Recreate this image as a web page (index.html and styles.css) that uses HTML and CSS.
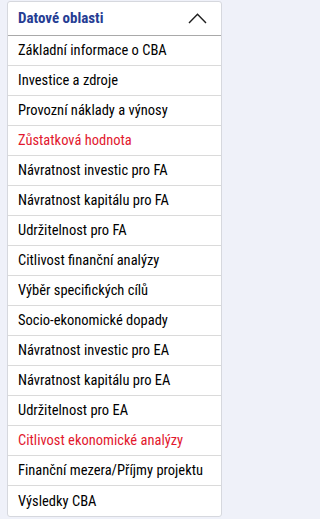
FILE: index.html
```html
<!DOCTYPE html>
<html lang="cs">
<head>
<meta charset="utf-8">
<link rel="stylesheet" href="styles.css">
</head>
<body>
<div class="panel">
  <div class="head">
    <span class="title">Datové oblasti</span>
    <svg class="chev" width="19" height="11" viewBox="0 0 19 11"><path d="M1 10 L9.5 1.2 L18 10" fill="none" stroke="#1e1e1e" stroke-width="1.4"/></svg>
  </div>
  <ul class="list">
    <li>Základní informace o CBA</li>
    <li>Investice a zdroje</li>
    <li>Provozní náklady a výnosy</li>
    <li class="red">Zůstatková hodnota</li>
    <li>Návratnost investic pro FA</li>
    <li>Návratnost kapitálu pro FA</li>
    <li>Udržitelnost pro FA</li>
    <li>Citlivost finanční analýzy</li>
    <li>Výběr specifických cílů</li>
    <li>Socio-ekonomické dopady</li>
    <li>Návratnost investic pro EA</li>
    <li>Návratnost kapitálu pro EA</li>
    <li>Udržitelnost pro EA</li>
    <li class="red">Citlivost ekonomické analýzy</li>
    <li>Finanční mezera/Příjmy projektu</li>
    <li>Výsledky CBA</li>
  </ul>
</div>
</body>
</html>
```
FILE: styles.css
```css
html, body {
  margin: 0;
  padding: 0;
  background: #eff1f9;
  overflow: hidden;
}
body {
  padding: 1px 0 0 7px;
  font-family: "Roboto Condensed", "DejaVu Sans Condensed", sans-serif;
}
.panel {
  width: 215px;
  background: #fff;
  border: 1px solid #d6d8de;
  border-radius: 3px;
  box-sizing: border-box;
}
.head {
  height: 34px;
  box-sizing: border-box;
  display: flex;
  align-items: center;
  justify-content: space-between;
  padding: 0 14px 0 10px;
  border-bottom: 1px solid #a9a9a9;
}
.title {
  color: #263d94;
  font-weight: bold;
  font-size: 15px;
  margin-top: -1px;
}
.chev {
  margin-top: -1px;
}
.list {
  list-style: none;
  margin: 0;
  padding: 0;
}
.list li {
  height: 30px;
  box-sizing: border-box;
  border-bottom: 1px solid #dadada;
  display: flex;
  align-items: center;
  padding-left: 10px;
  font-size: 14.5px;
  color: #000;
  white-space: nowrap;
}
.list li:last-child {
  border-bottom: none;
}
.list li.red {
  color: #e2182e;
}
```
